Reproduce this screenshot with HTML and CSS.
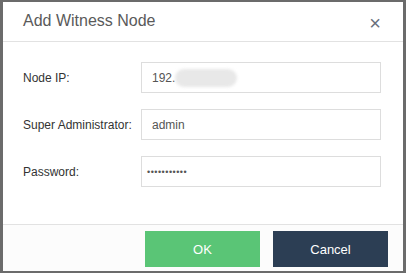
FILE: index.html
```html
<!DOCTYPE html>
<html lang="en">
<head>
    <meta charset="UTF-8">
    <title>Add Witness Node</title>
    <link rel="stylesheet" href="styles.css">
</head>
<body>

<div class="modal">
    <div class="modal-header">
        <h4>Add Witness Node</h4>
        <span class="close">&times;</span>
    </div>

    <div class="modal-body">
        <div class="row">
            <label>Node IP:</label>
            <div class="field">192.<span class="masked"></span></div>
        </div>
        <div class="row">
            <label>Super Administrator:</label>
            <div class="field">admin</div>
        </div>
        <div class="row">
            <label>Password:</label>
            <div class="field password">&bull;&bull;&bull;&bull;&bull;&bull;&bull;&bull;&bull;&bull;&bull;</div>
        </div>
    </div>

    <div class="modal-footer">
        <button class="btn ok">OK</button>
        <button class="btn cancel">Cancel</button>
    </div>
</div>

</body>
</html>
```

FILE: styles.css
```css
body {
    margin: 0;
    padding: 2px 3px;
    height: 273px;
    box-sizing: border-box;
    background-color: #6b6b6b;
    font-family: Arial, "Liberation Sans", sans-serif;
    overflow: hidden;
}
.modal {
    width: 400px;
    height: 269px;
    background-color: #fff;
    display: flex;
    flex-direction: column;
}
.modal-header {
    height: 39px;
    border-bottom: 1px solid #e2e2e2;
    display: flex;
    align-items: center;
    justify-content: space-between;
    padding: 0 22px 0 20px;
}
.modal-header h4 {
    margin: 0 0 2px 0;
    font-size: 16px;
    font-weight: normal;
    color: #5a5a5a;
}
.close {
    font-size: 20px;
    color: #6a6f7c;
    margin-top: 4px;
}
.modal-body {
    flex: 1;
    padding: 20px 22px 0 20px;
    display: flex;
    flex-direction: column;
    gap: 16px;
}
.row {
    display: flex;
    align-items: center;
}
.row label {
    width: 118px;
    font-size: 12px;
    color: #333;
}
.field {
    width: 240px;
    height: 31px;
    box-sizing: border-box;
    border: 1px solid #ddd;
    padding: 0 10px;
    display: flex;
    align-items: center;
    font-size: 12px;
    color: #555;
}
.masked {
    display: inline-block;
    width: 62px;
    height: 18px;
    background-color: #e8e8e8;
    border-radius: 9px;
    filter: blur(1.5px);
}
.password {
    padding-left: 5px;
    font-size: 9px;
    letter-spacing: 0.5px;
}
.modal-footer {
    border-top: 1px solid #e2e2e2;
    background-color: #fcfcfc;
    height: 47px;
    box-sizing: border-box;
    display: flex;
    justify-content: flex-end;
    gap: 13px;
    padding: 6px 15px 0 0;
}
.btn {
    width: 115px;
    height: 36px;
    border: none;
    font-family: Arial, "Liberation Sans", sans-serif;
    font-size: 13px;
    color: #fff;
}
.ok {
    background-color: #5ac576;
}
.cancel {
    background-color: #2c3e54;
}
```
